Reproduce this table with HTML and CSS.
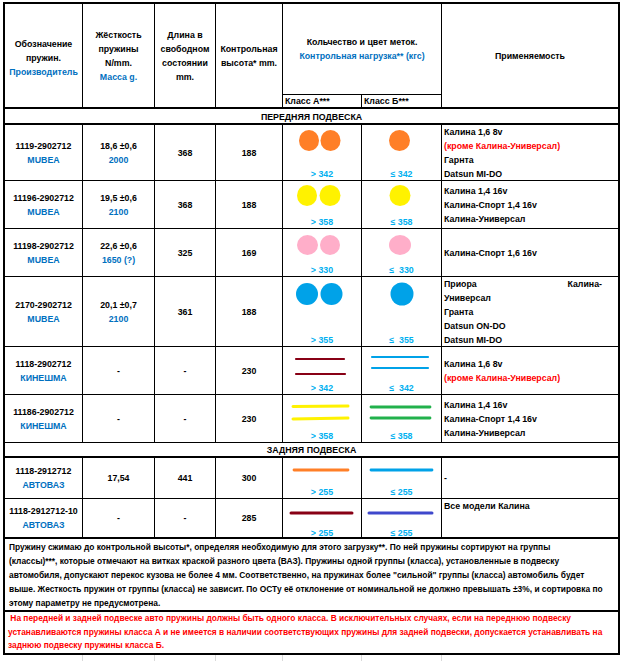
FILE: index.html
```html
<!DOCTYPE html>
<html lang="ru">
<head>
<meta charset="utf-8">
<title>Пружины</title>
<link rel="stylesheet" href="styles.css">
</head>
<body>
<div class="sheet">
  <!-- header -->
  <div class="c hdr rs2 tb pt4"><div>Обозначение</div><div>пружин.</div><div class="blue">Производитель</div></div>
  <div class="c hdr rs2 tb"><div>Жёсткость</div><div>пружины</div><div>N/mm.</div><div class="blue">Масса g.</div></div>
  <div class="c hdr rs2 tb"><div>Длина в</div><div>свободном</div><div>состоянии</div><div>mm.</div></div>
  <div class="c hdr rs2 tb"><div>Контрольная</div><div>высота* mm.</div></div>
  <div class="c hdr cs2 lh13"><div>Кольчество и цвет меток.</div><div class="blue">Контрольная нагрузка** (кгс)</div></div>
  <div class="c hdr rs2 tb last"><div>Применяемость</div></div>
  <div class="c cls tb">Класс А***</div>
  <div class="c cls tb">Класс Б***</div>

  <div class="c sec tb full s1">ПЕРЕДНЯЯ ПОДВЕСКА</div>

  <!-- row 1 -->
  <div class="c"><div>1119-2902712</div><div class="blue">MUBEA</div></div>
  <div class="c"><div>18,6 ±0,6</div><div class="blue">2000</div></div>
  <div class="c">368</div>
  <div class="c">188</div>
  <div class="c mk"><svg width="78" height="43" viewBox="0 0 78 43"><ellipse cx="26" cy="15.5" rx="10" ry="10.5" fill="#ff7f27"/><ellipse cx="47.5" cy="15.5" rx="10" ry="10.5" fill="#ff7f27"/></svg><div class="lbl">&gt; 342</div></div>
  <div class="c mk"><svg width="79" height="43" viewBox="0 0 79 43"><ellipse cx="37.5" cy="15.5" rx="10.5" ry="10.5" fill="#ff7f27"/></svg><div class="lbl">≤ 342</div></div>
  <div class="c app last"><div>Калина 1,6 8v</div><div class="red">(кроме Калина-Универсал)</div><div>Гарнта</div><div>Datsun MI-DO</div></div>

  <!-- row 2 -->
  <div class="c"><div>11196-2902712</div><div class="blue">MUBEA</div></div>
  <div class="c"><div>19,5 ±0,6</div><div class="blue">2100</div></div>
  <div class="c">368</div>
  <div class="c">188</div>
  <div class="c mk"><svg width="78" height="35" viewBox="0 0 78 35"><ellipse cx="24" cy="14.5" rx="10" ry="10.5" fill="#fff200"/><ellipse cx="47" cy="14.5" rx="10.5" ry="10.5" fill="#fff200"/></svg><div class="lbl">&gt; 358</div></div>
  <div class="c mk"><svg width="79" height="35" viewBox="0 0 79 35"><ellipse cx="38" cy="14.5" rx="10.5" ry="10.5" fill="#fff200"/></svg><div class="lbl">≤ 358</div></div>
  <div class="c app last"><div>Калина 1,4 16v</div><div>Калина-Спорт 1,4 16v</div><div>Калина-Универсал</div></div>

  <!-- row 3 -->
  <div class="c"><div>11198-2902712</div><div class="blue">MUBEA</div></div>
  <div class="c"><div>22,6 ±0,6</div><div class="blue">1650 (?)</div></div>
  <div class="c">325</div>
  <div class="c">169</div>
  <div class="c mk"><svg width="78" height="35" viewBox="0 0 78 35"><ellipse cx="24.5" cy="16" rx="10.5" ry="10" fill="#ffaec9"/><ellipse cx="47" cy="16" rx="10" ry="10" fill="#ffaec9"/></svg><div class="lbl">&gt; 330</div></div>
  <div class="c mk"><svg width="79" height="35" viewBox="0 0 79 35"><ellipse cx="38" cy="16" rx="11" ry="10" fill="#ffaec9"/></svg><div class="lbl">≤&nbsp;&nbsp;330</div></div>
  <div class="c app last"><div>Калина-Спорт 1,6 16v</div></div>

  <!-- row 4 -->
  <div class="c"><div>2170-2902712</div><div class="blue">MUBEA</div></div>
  <div class="c"><div>20,1 ±0,7</div><div class="blue">2100</div></div>
  <div class="c">361</div>
  <div class="c">188</div>
  <div class="c mk"><svg width="78" height="57" viewBox="0 0 78 57"><ellipse cx="24" cy="17" rx="11" ry="11" fill="#00a2e8"/><ellipse cx="48.5" cy="17" rx="11" ry="11" fill="#00a2e8"/></svg><div class="lbl">&gt; 355</div></div>
  <div class="c mk"><svg width="79" height="57" viewBox="0 0 79 57"><ellipse cx="40" cy="17" rx="11.5" ry="11.5" fill="#00a2e8"/></svg><div class="lbl">≤&nbsp;&nbsp;355</div></div>
  <div class="c app last"><div class="just"><span>Приора</span><span>Калина-</span></div><div>Универсал</div><div>Гранта</div><div>Datsun ON-DO</div><div>Datsun MI-DO</div></div>

  <!-- row 5 -->
  <div class="c"><div>1118-2902712</div><div class="blue">КИНЕШМА</div></div>
  <div class="c">-</div>
  <div class="c">-</div>
  <div class="c">230</div>
  <div class="c mk"><svg width="78" height="35" viewBox="0 0 78 35"><g stroke="#880015" stroke-width="2.2" stroke-linecap="round"><line x1="13" y1="12" x2="61" y2="12"/><line x1="13" y1="27" x2="62" y2="27"/></g></svg><div class="lbl">&gt; 342</div></div>
  <div class="c mk"><svg width="79" height="35" viewBox="0 0 79 35"><g stroke="#00a2e8" stroke-width="2.2" stroke-linecap="round"><line x1="10" y1="10" x2="66" y2="10"/><line x1="10" y1="21" x2="66" y2="21"/></g></svg><div class="lbl">≤&nbsp;&nbsp;342</div></div>
  <div class="c app last"><div>Калина 1,6 8v</div><div class="red">(кроме Калина-Универсал)</div></div>

  <!-- row 6 -->
  <div class="c"><div>11186-2902712</div><div class="blue">КИНЕШМА</div></div>
  <div class="c">-</div>
  <div class="c">-</div>
  <div class="c">230</div>
  <div class="c mk"><svg width="78" height="34" viewBox="0 0 78 34"><g stroke="#fff200" stroke-width="3" stroke-linecap="round"><line x1="10" y1="11.5" x2="65" y2="11"/><line x1="10" y1="24" x2="65" y2="23"/></g></svg><div class="lbl">&gt; 358</div></div>
  <div class="c mk"><svg width="79" height="34" viewBox="0 0 79 34"><g stroke="#22b14c" stroke-width="2.8" stroke-linecap="round"><line x1="9" y1="12" x2="68" y2="12"/><line x1="9" y1="23" x2="68" y2="23"/></g></svg><div class="lbl">≤ 358</div></div>
  <div class="c app last"><div>Калина 1,4 16v</div><div>Калина-Спорт 1,4 16v</div><div>Калина-Универсал</div></div>

  <div class="c sec tb full s2">ЗАДНЯЯ ПОДВЕСКА</div>

  <!-- row 7 -->
  <div class="c"><div>1118-2912712</div><div class="blue">АВТОВАЗ</div></div>
  <div class="c">17,54</div>
  <div class="c">441</div>
  <div class="c">300</div>
  <div class="c mk"><svg width="78" height="28" viewBox="0 0 78 28"><line x1="11" y1="12" x2="65" y2="12" stroke="#ff7f27" stroke-width="2.8" stroke-linecap="round"/></svg><div class="lbl">&gt; 255</div></div>
  <div class="c mk"><svg width="79" height="28" viewBox="0 0 79 28"><line x1="9" y1="12" x2="70" y2="12" stroke="#00a2e8" stroke-width="2.8" stroke-linecap="round"/></svg><div class="lbl">≤ 255</div></div>
  <div class="c app last"><div>-</div></div>

  <!-- row 8 -->
  <div class="c tb"><div>1118-2912712-10</div><div class="blue">АВТОВАЗ</div></div>
  <div class="c tb">-</div>
  <div class="c tb">-</div>
  <div class="c tb">285</div>
  <div class="c mk tb"><svg width="78" height="26" viewBox="0 0 78 26"><line x1="8" y1="14" x2="69" y2="14" stroke="#880015" stroke-width="3" stroke-linecap="round"/></svg><div class="lbl low">&gt; 255</div></div>
  <div class="c mk tb"><svg width="79" height="26" viewBox="0 0 79 26"><line x1="7" y1="14" x2="70" y2="14" stroke="#3f48cc" stroke-width="3" stroke-linecap="round"/></svg><div class="lbl low">≤ 255</div></div>
  <div class="c app top tb last"><div>Все модели Калина</div></div>

  <!-- notes -->
  <div class="c note tb full">Пружину сжимаю до контрольной высоты*, определяя необходимую для этого загрузку**. По ней пружины сортируют на группы<br>(классы)***, которые отмечают на витках краской разного цвета (ВАЗ). Пружины одной группы (класса), установленные в подвеску<br>автомобиля, допускают перекос кузова не более 4 мм. Соответственно, на пружинах более "сильной" группы (класса) автомобиль будет<br>выше. Жесткость пружин от группы (класса) не зависит. По ОСТу её отклонение от номинальной не должно превышать ±3%, и сортировка по<br>этому параметру не предусмотрена.</div>
  <div class="c note red n2 tb full">&nbsp;На передней и задней подвеске авто пружины должны быть одного класса. В исключительных случаях, если на переднюю подвеску<br>устанавливаются пружины класса А и не имеется в наличии соответствующих пружины для задней подвески, допускается устанавливать на<br>заднюю подвеску пружины класса Б.</div>
</div>
<div class="below"><span></span><span></span><span></span><span></span><span></span><span></span><span></span></div>
</body>
</html>
```

FILE: styles.css
```css
html, body {
  margin: 0;
  padding: 0;
  background: #fff;
}

body {
  font-family: "Liberation Sans", Arial, sans-serif;
  font-weight: bold;
  font-size: 8.8px;
  color: #000;
}

.sheet {
  display: grid;
  grid-template-columns: 78px 72px 61px 67px 79px 80px 178px;
  grid-template-rows: 91px 14px 16px 56px 48px 48px 70px 48px 48px 15px 41px 40px 73px 43px;
  width: max-content;
  margin: 2px 0 0 3px;
  border-top: 2px solid #000;
  border-left: 2px solid #000;
}

.c {
  box-sizing: border-box;
  border-right: 1px solid #000;
  border-bottom: 1px solid #000;
  display: flex;
  flex-direction: column;
  justify-content: center;
  align-items: center;
  text-align: center;
  line-height: 14px;
  overflow: hidden;
  white-space: nowrap;
}

.last { border-right-width: 2px; }
.tb { border-bottom-width: 2px; }
.rs2 { grid-row: span 2; }
.cs2 { grid-column: span 2; }
.full { grid-column: 1 / -1; border-right-width: 2px; }

.pt4 { padding-top: 4px; }
.lh13 { line-height: 13.4px; padding-top: 1px; }

.blue { color: #0070c0; }
.red { color: #ff0000; }

.cls {
  align-items: flex-start;
  justify-content: flex-end;
  padding-left: 2px;
  line-height: 12px;
}

.sec { line-height: 13px; }
.s1 { padding-top: 3px; }
.s2 { padding-top: 1px; }

.mk {
  justify-content: space-between;
  align-items: stretch;
}
.mk svg { display: block; }

.lbl {
  color: #00b0f0;
  line-height: 12px;
  text-align: center;
}
.lbl.low { margin-bottom: -2px; }

.app {
  align-items: stretch;
  text-align: left;
  padding-left: 2px;
}
.app.top { justify-content: flex-start; }

.just {
  display: flex;
  justify-content: space-between;
  width: 158px;
}

.note {
  align-items: flex-start;
  text-align: left;
  padding-left: 4px;
  line-height: 14px;
  font-size: 8.4px;
}
.n2 { line-height: 13.5px; padding-left: 3px; }

.below {
  display: grid;
  grid-template-columns: 78px 72px 61px 67px 79px 80px 178px;
  height: 8px;
  margin-left: 5px;
  width: max-content;
}
.below span {
  border-right: 1px solid #dadada;
}
.below span:last-child { border-right: none; }
```
